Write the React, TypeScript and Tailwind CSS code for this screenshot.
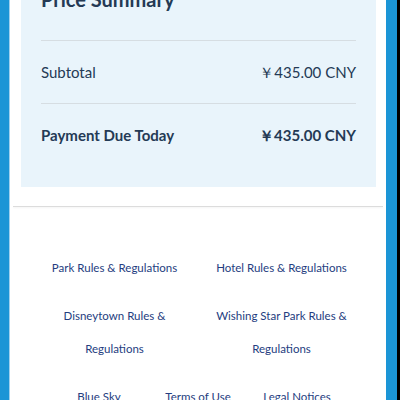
import React from 'react';

const links = [
  ['Park Rules & Regulations', 'Hotel Rules & Regulations'],
  ['Disneytown Rules & Regulations', 'Wishing Star Park Rules & Regulations'],
];

const App: React.FC = () => {
  return (
    <div className="w-[400px] h-[400px] overflow-hidden flex bg-[#1b95d6]" style={{ fontFamily: 'Lato, "Noto Sans", sans-serif' }}>
      <div className="w-[9px] shrink-0" />
      <div className="w-[377px] shrink-0 bg-white border-l border-[#9fd0ee] flex flex-col">
        {/* Price summary panel */}
        <div className="shrink-0 ml-[11px] mr-[10px] bg-[#e9f4fb] px-5 pb-5 text-[#243a55]">
          <h2 className="-mt-[15px] text-[20px] font-bold leading-[28px]">Price Summary</h2>
          <div className="mt-[27px] border-t border-[#d6dde2]" />
          <div className="h-[63px] flex items-center justify-between text-[15px] border-b border-[#d6dde2]">
            <span>Subtotal</span>
            <span>￥435.00 CNY</span>
          </div>
          <div className="h-[63px] flex items-center justify-between text-[15px] font-bold">
            <span>Payment Due Today</span>
            <span>￥435.00 CNY</span>
          </div>
        </div>

        <div className="shrink-0 mt-[19px] mx-[3px] h-px bg-[#dcdcdc] shadow-[0_1px_2px_rgba(0,0,0,0.06)]" />

        {/* Footer links */}
        <div className="shrink-0 mt-[44px] px-[21px] text-[11.5px] leading-[33px] text-[#253d80] text-center flex flex-col gap-[15px]">
          {links.map((row, i) => (
            <div key={i} className="grid grid-cols-2">
              {row.map(label => (
                <a key={label} className="px-[12px]">{label}</a>
              ))}
            </div>
          ))}
          <div className="flex justify-center">
            <a className="w-[99px]">Blue Sky</a>
            <a className="w-[99px]">Terms of Use</a>
            <a className="w-[99px]">Legal Notices</a>
          </div>
        </div>
      </div>
      <div className="w-[11px] shrink-0" />
      <div className="w-[3px] shrink-0 bg-black" />
    </div>
  );
};

export default App;
